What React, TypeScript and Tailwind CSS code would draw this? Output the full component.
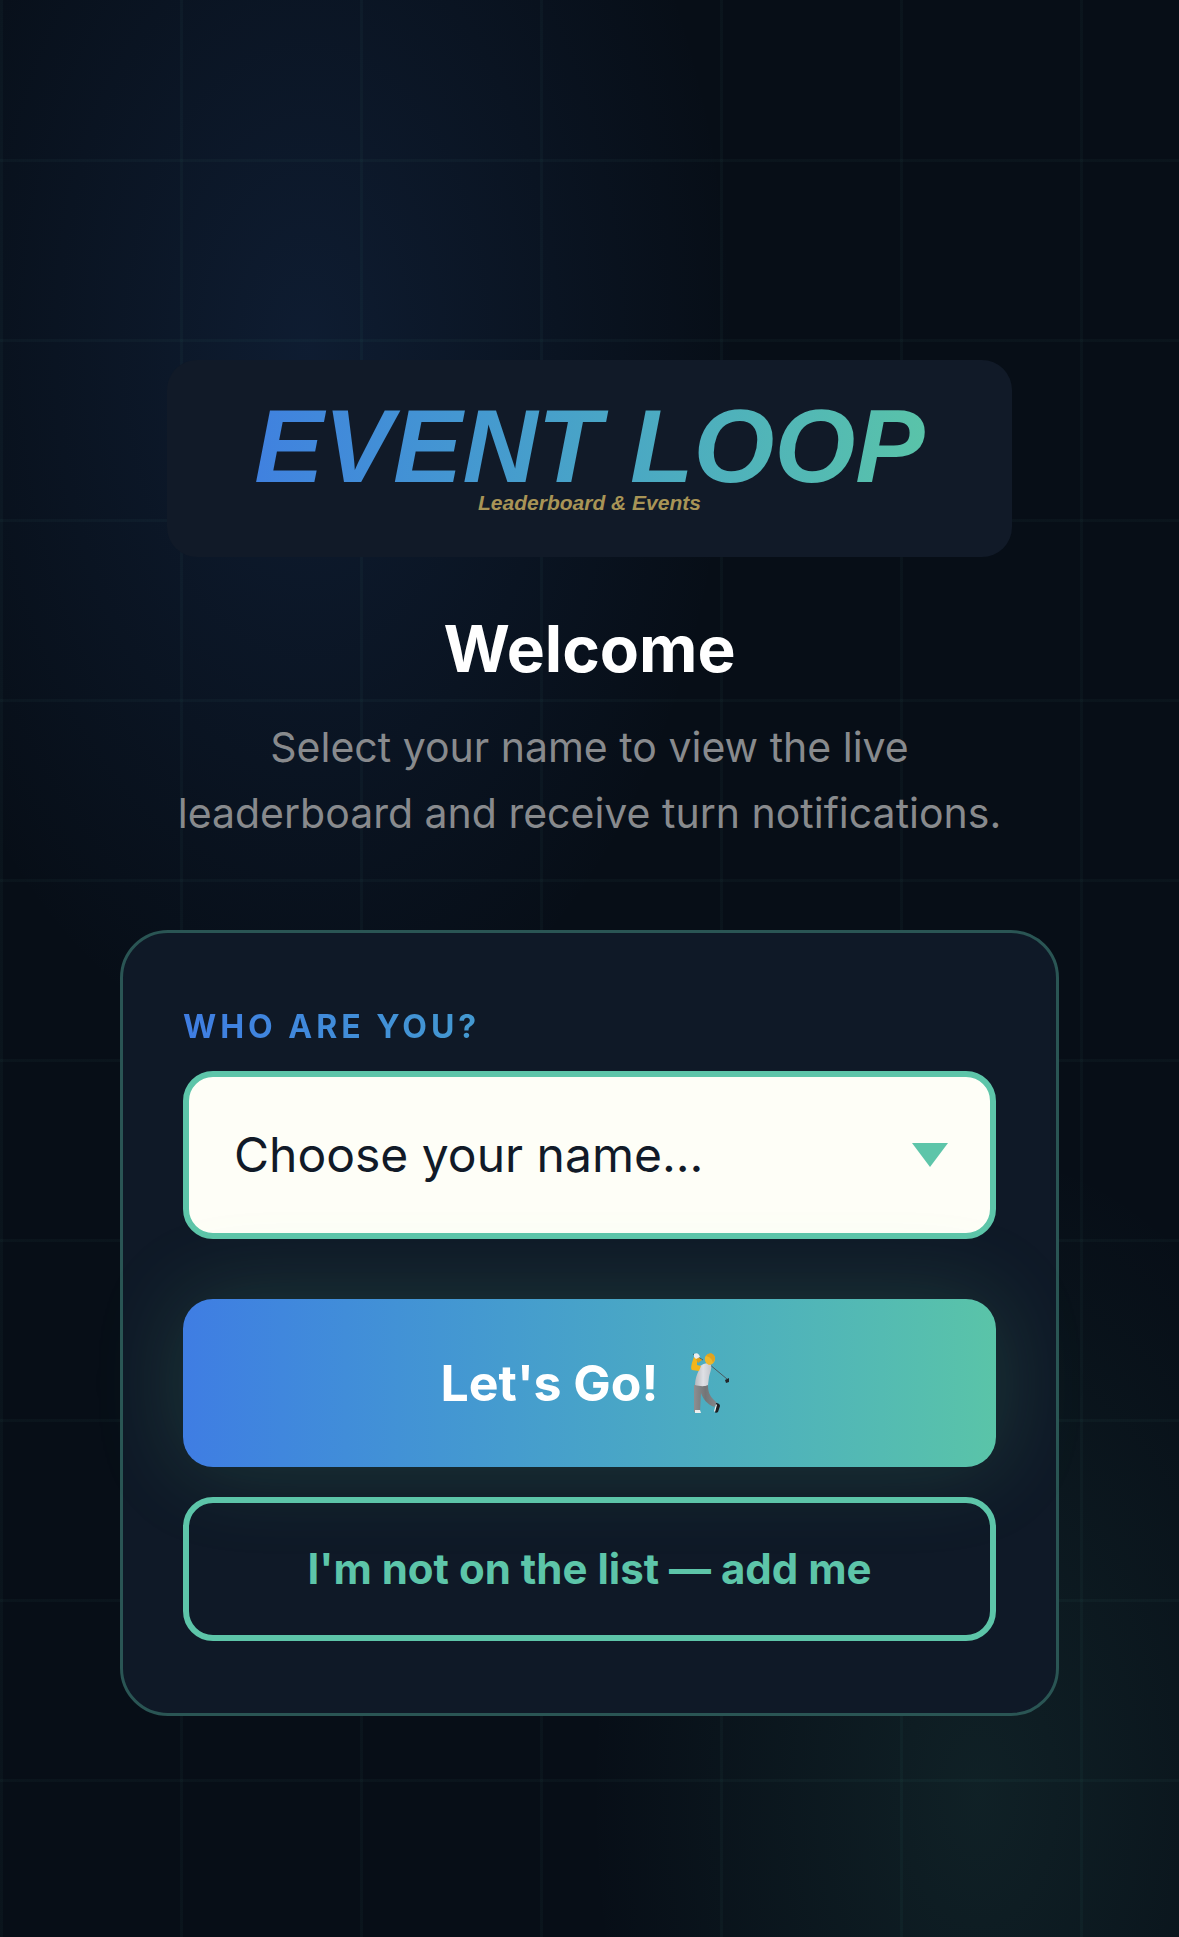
import { useState } from "react";

const PLAYERS = ["Alex", "Jordan", "Sam", "Taylor"];

export default function App() {
  const [name, setName] = useState("");

  return (
    <main className="relative isolate min-h-screen overflow-hidden bg-[#070e17] px-[120px] pt-[360px] pb-[221px] font-['Inter','Noto_Sans',sans-serif]">
      {/* Glow and grid backdrop */}
      <div className="absolute inset-0 -z-10 bg-[radial-gradient(430px_720px_at_26%_350px,rgba(64,125,227,0.13),transparent),radial-gradient(390px_650px_at_83%_calc(100%-142px),rgba(92,197,170,0.10),transparent)]" />
      <div className="absolute inset-0 -z-10 bg-[linear-gradient(rgba(92,197,170,0.04)_3px,transparent_3px),linear-gradient(90deg,rgba(92,197,170,0.04)_3px,transparent_3px)] bg-[length:180px_180px] bg-[position:0_-21px]" />

      <div className="flex flex-col items-center">
        {/* Logo */}
        <div className="flex w-9/10 flex-col items-center rounded-[30px] bg-[#111a28] pt-[40px] pb-[44px] font-['Liberation_Sans',Arial,sans-serif] font-bold italic">
          <div className="bg-linear-to-r from-[#4080e0] to-[#5ac4a8] bg-clip-text px-2 text-[104px] leading-[92px] whitespace-nowrap text-transparent">
            EVENT LOOP
          </div>
          <div className="text-[21px] leading-[21px] text-[#a89456]">Leaderboard &amp; Events</div>
        </div>

        {/* Heading */}
        <h1 className="mt-[54px] text-[64px] leading-[76px] font-bold text-white">Welcome</h1>
        <p className="mt-[27px] max-w-[860px] text-center text-[41px] leading-[66px] text-[#888a8d]">
          Select your name to view the live leaderboard and receive turn notifications.
        </p>

        {/* Sign in card */}
        <form
          onSubmit={(e) => e.preventDefault()}
          className="mt-[84px] flex w-full flex-col rounded-[48px] border-[3px] border-[#2a5554] bg-[#0f1927] px-[60px] pt-[73px] pb-[72px]"
        >
          <label
            htmlFor="player"
            className="bg-linear-to-r from-[#3f7de3] to-[#5ac4a8] bg-clip-text text-[32px] leading-[42px] font-bold tracking-[4px] text-transparent"
          >
            WHO ARE YOU?
          </label>
          <div className="relative mt-[23px]">
            <select
              id="player"
              value={name}
              onChange={(e) => setName(e.target.value)}
              className="w-full appearance-none rounded-[30px] border-[6px] border-[#5dc5a9] bg-[#fefef7] py-[48px] pr-[120px] pl-[45px] text-[48px] leading-[60px] text-[#111a28] outline-none"
            >
              <option value="">Choose your name...</option>
              {PLAYERS.map((player) => (
                <option key={player} value={player}>
                  {player}
                </option>
              ))}
            </select>
            <svg
              className="pointer-events-none absolute top-1/2 right-[48px] h-6 w-9 -translate-y-1/2"
              viewBox="0 0 36 24"
              fill="#5dc5a9"
            >
              <path d="M0 0h36L18 24z" />
            </svg>
          </div>

          <button
            type="submit"
            className="relative mt-[60px] flex items-center justify-center gap-5 rounded-[30px] bg-linear-to-r from-[#3f7de3] to-[#5ac4a8] py-[54px] text-[50px] leading-[60px] font-bold text-white shadow-[0_0_90px_rgba(92,197,140,0.2)]"
          >
            Let's Go!
            <Golfer />
          </button>
          <button
            type="button"
            className="relative mt-[30px] rounded-[30px] border-[6px] border-[#5dc5a9] py-[42px] text-[42px] leading-[48px] font-bold text-[#5dc5a9]"
          >
            I'm not on the list — add me
          </button>
        </form>
      </div>
    </main>
  );
}

function Golfer() {
  return (
    <svg className="h-[60px] w-[60px]" viewBox="0 0 60 60" fill="none">
      <defs>
        <linearGradient id="shirt" x1="0" y1="0" x2="1" y2="0">
          <stop stopColor="#b4b8bd" />
          <stop offset="0.5" stopColor="#dfe0e5" />
          <stop offset="1" stopColor="#c3c6cc" />
        </linearGradient>
        <linearGradient id="trousers" x1="0" y1="0" x2="1" y2="0">
          <stop stopColor="#8d8e90" />
          <stop offset="0.5" stopColor="#737577" />
          <stop offset="1" stopColor="#85878a" />
        </linearGradient>
      </defs>
      {/* club */}
      <path d="M15 1l10 6M31 11l18 15" stroke="#4a5a60" strokeWidth="1" />
      <path d="M47 27l4-2v4l-3 1z" fill="#23262a" />
      {/* legs */}
      <path
        d="M16 32h14c0 7 2 11 5 14l4 4-3 4c-7-3-11-8-13-14l-1 19h-6z"
        fill="url(#trousers)"
      />
      <path d="M17 57h5l1 3h-6z" fill="#eee" />
      <path d="M38 50c2 0 4 1 4 3l-2 6c-1 1-3 1-3 0z" fill="#1d1f22" />
      <path d="M38 51l1 1-2 7-1-1z" fill="#eee" />
      {/* body */}
      <path d="M22 13c4-3 9-4 11-1 1 3-1 8-2 12l-1 8c-4 2-9 1-13 0 0-6 2-11 4-15l-2-1z" fill="url(#shirt)" />
      {/* arms */}
      <path d="M16 4l3 1v7l4 1-2 5-7-1c-2-1 0-8 2-13z" fill="#f3b51b" />
      <path d="M20 4l4 3-4 3-2-4z" fill="#d9a01f" />
      <path d="M16 1c3-2 5 0 6 3l-4 2-2-2z" fill="#ececec" />
      {/* head */}
      <path d="M27 4c3-5 10-4 10 2 0 3-3 6-6 6-3-1-5-4-4-8z" fill="#f0b62a" />
      <path d="M28 3c3-5 9-3 9 3l-2 4c-1-4-3-6-7-7z" fill="#e0a320" />
    </svg>
  );
}
